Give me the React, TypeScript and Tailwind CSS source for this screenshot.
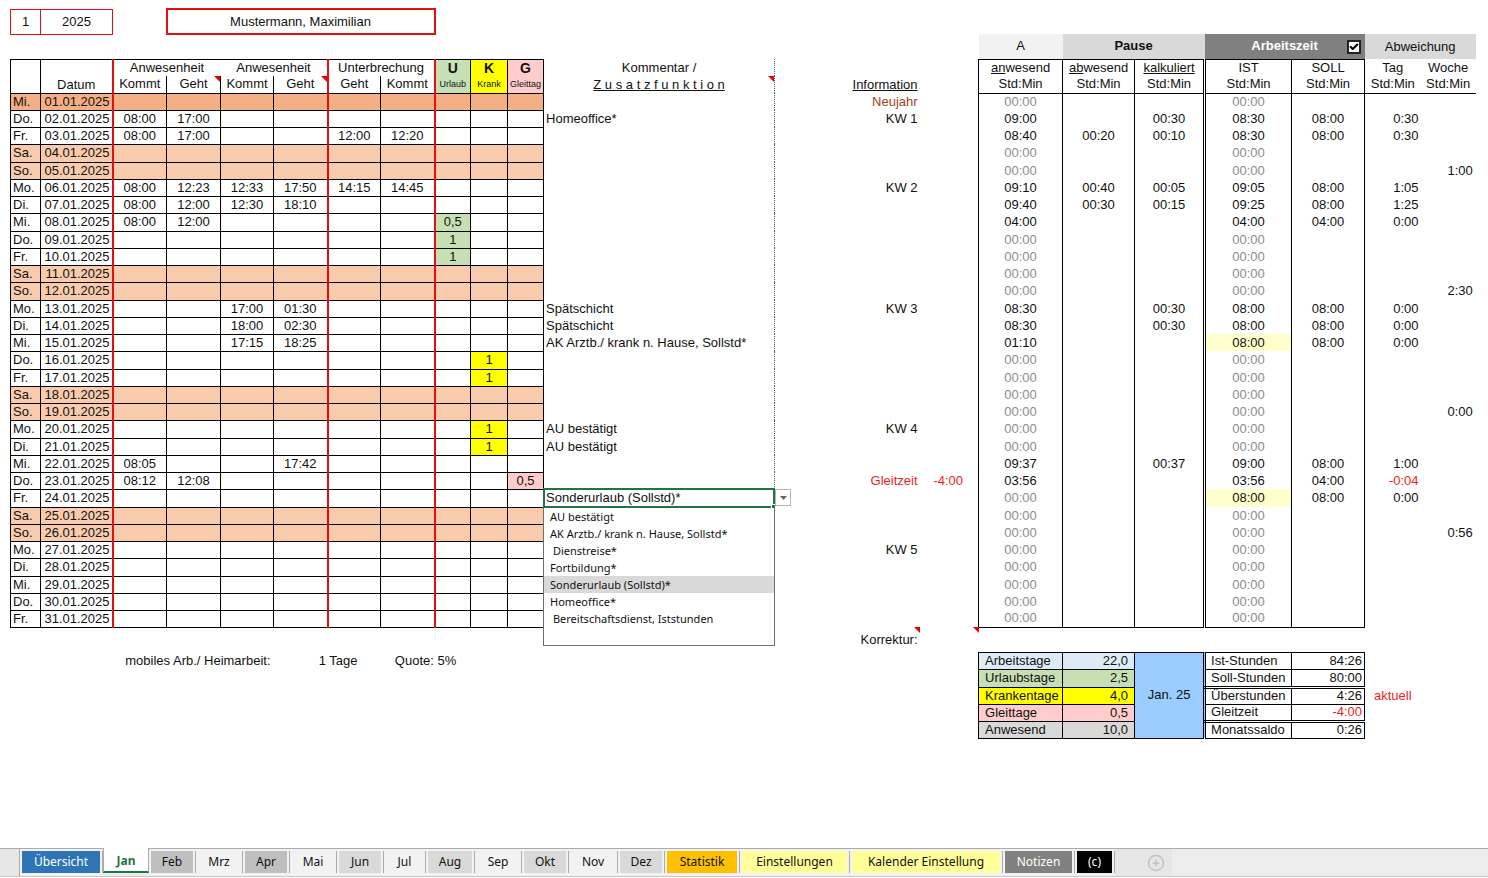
import { useState } from "react";
import { Check, CirclePlus } from "lucide-react";
import clsx from "clsx";

type DayEntry = {
  times?: string[];
  urlaub?: string;
  krank?: string;
  gleittag?: string;
  comment?: string;
  info?: string;
  infoColor?: string;
  gleitzeit?: string;
  anwesend?: string;
  abwesend?: string;
  kalkuliert?: string;
  ist?: string;
  istMarked?: boolean;
  soll?: string;
  tag?: string;
  woche?: string;
};

const WEEKDAYS = ["Mi.", "Do.", "Fr.", "Sa.", "So.", "Mo.", "Di."];

const ENTRIES: Record<number, DayEntry> = {
  1: { info: "Neujahr", infoColor: "text-[#a5401c]" },
  2: {
    times: ["08:00", "17:00"],
    comment: "Homeoffice*",
    info: "KW 1",
    anwesend: "09:00",
    kalkuliert: "00:30",
    ist: "08:30",
    soll: "08:00",
    tag: "0:30",
  },
  3: {
    times: ["08:00", "17:00", "", "", "12:00", "12:20"],
    anwesend: "08:40",
    abwesend: "00:20",
    kalkuliert: "00:10",
    ist: "08:30",
    soll: "08:00",
    tag: "0:30",
  },
  5: { woche: "1:00" },
  6: {
    times: ["08:00", "12:23", "12:33", "17:50", "14:15", "14:45"],
    info: "KW 2",
    anwesend: "09:10",
    abwesend: "00:40",
    kalkuliert: "00:05",
    ist: "09:05",
    soll: "08:00",
    tag: "1:05",
  },
  7: {
    times: ["08:00", "12:00", "12:30", "18:10"],
    anwesend: "09:40",
    abwesend: "00:30",
    kalkuliert: "00:15",
    ist: "09:25",
    soll: "08:00",
    tag: "1:25",
  },
  8: {
    times: ["08:00", "12:00"],
    urlaub: "0,5",
    anwesend: "04:00",
    ist: "04:00",
    soll: "04:00",
    tag: "0:00",
  },
  9: { urlaub: "1" },
  10: { urlaub: "1" },
  12: { woche: "2:30" },
  13: {
    times: ["", "", "17:00", "01:30"],
    comment: "Spätschicht",
    info: "KW 3",
    anwesend: "08:30",
    kalkuliert: "00:30",
    ist: "08:00",
    soll: "08:00",
    tag: "0:00",
  },
  14: {
    times: ["", "", "18:00", "02:30"],
    comment: "Spätschicht",
    anwesend: "08:30",
    kalkuliert: "00:30",
    ist: "08:00",
    soll: "08:00",
    tag: "0:00",
  },
  15: {
    times: ["", "", "17:15", "18:25"],
    comment: "AK Arztb./ krank n. Hause, Sollstd*",
    anwesend: "01:10",
    ist: "08:00",
    istMarked: true,
    soll: "08:00",
    tag: "0:00",
  },
  16: { krank: "1" },
  17: { krank: "1" },
  19: { woche: "0:00" },
  20: { krank: "1", comment: "AU bestätigt", info: "KW 4" },
  21: { krank: "1", comment: "AU bestätigt" },
  22: {
    times: ["08:05", "", "", "17:42"],
    anwesend: "09:37",
    kalkuliert: "00:37",
    ist: "09:00",
    soll: "08:00",
    tag: "1:00",
  },
  23: {
    times: ["08:12", "12:08"],
    gleittag: "0,5",
    info: "Gleitzeit",
    infoColor: "text-[#ee1c25]",
    gleitzeit: "-4:00",
    anwesend: "03:56",
    ist: "03:56",
    soll: "04:00",
    tag: "-0:04",
  },
  24: { ist: "08:00", istMarked: true, soll: "08:00", tag: "0:00" },
  26: { woche: "0:56" },
  27: { info: "KW 5" },
};

const ACTIVE_DAY = 24;

const OPTIONS = [
  "AU bestätigt",
  "AK Arztb./ krank n. Hause, Sollstd*",
  " Dienstreise*",
  "Fortbildung*",
  "Sonderurlaub (Sollstd)*",
  "Homeoffice*",
  " Bereitschaftsdienst, Iststunden",
];

const COLUMNS = [
  "w-[30px]",
  "w-[72px]",
  "w-[54px]",
  "w-[54px]",
  "w-[53px]",
  "w-[54px]",
  "w-[53px]",
  "w-[54px]",
  "w-[36px]",
  "w-[37px]",
  "w-[36px]",
  "w-[231px]",
  "w-[145px]",
  "w-[59px]",
  "w-[84px]",
  "w-[72px]",
  "w-[70px]",
  "w-[87px]",
  "w-[73px]",
  "w-[56px]",
  "w-[55px]",
];

const SUMMARY = [
  { label: "Arbeitstage", value: "22,0", color: "bg-[#ddebf7]", label2: "Ist-Stunden", value2: "84:26" },
  { label: "Urlaubstage", value: "2,5", color: "bg-[#c6e0b4]", label2: "Soll-Stunden", value2: "80:00", double: true },
  { label: "Krankentage", value: "4,0", color: "bg-[#ffff00]", label2: "Überstunden", value2: "4:26" },
  { label: "Gleittage", value: "0,5", color: "bg-[#ffcccc]", label2: "Gleitzeit", value2: "-4:00", double: true },
  { label: "Anwesend", value: "10,0", color: "bg-[#d9d9d9]", label2: "Monatssaldo", value2: "0:26" },
];

const TABS = [
  { name: "Übersicht", width: "w-[83px]", color: "bg-[#2e75b6] text-white" },
  { name: "Jan", width: "w-[46px]", color: "" },
  { name: "Feb", width: "w-[47px]", color: "bg-[#bfbfbf]" },
  { name: "Mrz", width: "w-[47px]", color: "bg-[#f2f2f2]" },
  { name: "Apr", width: "w-[47px]", color: "bg-[#bfbfbf]" },
  { name: "Mai", width: "w-[47px]", color: "bg-[#f2f2f2]" },
  { name: "Jun", width: "w-[47px]", color: "bg-[#d9d9d9]" },
  { name: "Jul", width: "w-[42px]", color: "bg-[#f2f2f2]" },
  { name: "Aug", width: "w-[49px]", color: "bg-[#d9d9d9]" },
  { name: "Sep", width: "w-[47px]", color: "bg-[#f2f2f2]" },
  { name: "Okt", width: "w-[47px]", color: "bg-[#d9d9d9]" },
  { name: "Nov", width: "w-[49px]", color: "bg-[#f2f2f2]" },
  { name: "Dez", width: "w-[47px]", color: "bg-[#d9d9d9]" },
  { name: "Statistik", width: "w-[75px]", color: "bg-[#ffc000]" },
  { name: "Einstellungen", width: "w-[110px]", color: "bg-[#ffff99]" },
  { name: "Kalender Einstellung", width: "w-[153px]", color: "bg-[#ffff99]" },
  { name: "Notizen", width: "w-[72px]", color: "bg-[#808080] text-white" },
  { name: "(c)", width: "w-[40px]", color: "bg-black text-white" },
];

function NoteMark() {
  return (
    <svg className="absolute top-0 right-0 size-[6px]" viewBox="0 0 6 6" aria-hidden="true">
      <path d="M0 0h6v6z" fill="#e60000" />
    </svg>
  );
}

function CommentPicker() {
  const [value, setValue] = useState("Sonderurlaub (Sollstd)*");
  const [open, setOpen] = useState(true);

  return (
    <>
      <select
        aria-label="Zusatzfunktion"
        value={value}
        onChange={(e) => setValue(e.target.value)}
        className="block w-full appearance-none bg-transparent outline-none"
      >
        {OPTIONS.map((option) => (
          <option key={option} value={option}>
            {option}
          </option>
        ))}
      </select>
      <div className="pointer-events-none absolute -inset-px border-2 border-[#217346]">
        <span className="absolute -right-[2px] -bottom-[2px] size-1 border-t border-l border-white bg-[#217346]" />
      </div>
      <button
        type="button"
        aria-label="Liste öffnen"
        onClick={() => setOpen(!open)}
        className="absolute top-0 left-full ml-px flex h-[17px] w-4 items-center justify-center border border-[#b5b5b5] bg-white"
      >
        <svg className="h-1 w-[7px]" viewBox="0 0 7 4" aria-hidden="true">
          <path d="M0 0h7L3.5 4z" fill="#666" />
        </svg>
      </button>
      {open && (
        <ul
          role="listbox"
          className="absolute top-full -right-px -left-px z-10 mt-px h-[138px] border border-t-0 border-[#707070] bg-white font-['Noto_Sans',sans-serif] text-[11px]"
        >
          {OPTIONS.map((option) => (
            <li key={option} role="option" aria-selected={option === value}>
              <button
                type="button"
                onClick={() => {
                  setValue(option);
                  setOpen(false);
                }}
                className={clsx(
                  "block h-[17px] w-full pl-[6px] text-left leading-[17px] whitespace-pre",
                  option === value && "bg-[#d9d9d9]"
                )}
              >
                {option}
              </button>
            </li>
          ))}
        </ul>
      )}
    </>
  );
}

function DayRow({ day }: { day: number }) {
  const entry = ENTRIES[day] ?? {};
  const weekday = WEEKDAYS[(day - 1) % 7];
  const weekend = weekday === "Sa." || weekday === "So.";
  const last = day === 31;

  return (
    // every fourth row is one pixel taller
    <tr className={day % 4 === 0 ? "h-[18px]" : "h-[17px]"}>
      {[weekday, `${String(day).padStart(2, "0")}.01.2025`, 0, 1, 2, 3, 4, 5, "u", "k", "g"].map((cell, i) => {
        const fill = day === 1 ? "bg-[#f4b084]" : weekend ? "bg-[#f8cbad]" : "";
        let text = typeof cell === "number" ? entry.times?.[cell] : cell;
        let color = fill;
        if (cell === "u") {
          text = entry.urlaub;
          if (text) color = "bg-[#c6e0b4]";
        } else if (cell === "k") {
          text = entry.krank;
          if (text) color = "bg-[#ffff00]";
        } else if (cell === "g") {
          text = entry.gleittag;
          if (text) color = "bg-[#ffcccc]";
        }
        return (
          <td
            key={i}
            className={clsx(
              "border border-black",
              i === 0 && "pl-[2px]",
              i === 1 && "pr-[2px] text-right",
              i > 1 && "text-center",
              (i === 1 || i === 5 || i === 7) && "border-r-2 border-r-[#e60f0f]",
              color
            )}
          >
            {text}
          </td>
        );
      })}
      <td className="relative border-r border-dotted border-r-[#555] pl-[2px]">
        {day === ACTIVE_DAY ? <CommentPicker /> : entry.comment}
      </td>
      <td className={clsx("pr-[2px] text-right", entry.infoColor)}>{entry.info}</td>
      <td className="pr-[15px] text-right text-[#ee1c25]">{entry.gleitzeit}</td>
      <td className={clsx("border-x border-black text-center", last && "border-b", !entry.anwesend && "text-[#8c8c8c]")}>
        {entry.anwesend ?? "00:00"}
      </td>
      <td className={clsx("border-x border-black text-center", last && "border-b")}>{entry.abwesend}</td>
      <td className={clsx("border-l border-black text-center", last && "border-b")}>{entry.kalkuliert}</td>
      <td
        className={clsx(
          "border-r border-l-3 border-black text-center [border-left-style:double]",
          last && "border-b",
          entry.istMarked && "bg-[#ffffcc]",
          !entry.ist && "text-[#8c8c8c]"
        )}
      >
        {entry.ist ?? "00:00"}
      </td>
      <td className={clsx("border-x border-black text-center", last && "border-b")}>{entry.soll}</td>
      <td className={clsx("pr-[2px] text-right", entry.tag?.startsWith("-") && "text-[#ee1c25]")}>{entry.tag}</td>
      <td className="pr-[3px] text-right">{entry.woche}</td>
    </tr>
  );
}

function SheetHeader() {
  return (
    <thead>
      <tr className="h-[25px]">
        <td className="border border-[#e60f0f] text-center">1</td>
        <td className="border border-[#e60f0f] text-center">2025</td>
        <td />
        <td colSpan={5} className="border-2 border-[#e60f0f] text-center">
          Mustermann, Maximilian
        </td>
        <td colSpan={13} />
      </tr>
      <tr className="h-[25px]">
        <td colSpan={14} />
        <th className="bg-[#f2f2f2]">A</th>
        <th colSpan={2} className="bg-[#d9d9d9] font-bold">
          Pause
        </th>
        <th colSpan={2} className="relative bg-[#808080] font-bold text-white">
          Arbeitszeit
          <input
            type="checkbox"
            aria-label="Arbeitszeit"
            defaultChecked
            className="peer absolute top-[6px] right-1 size-[14px] appearance-none border-2 border-[#222] bg-white"
          />
          <Check
            className="pointer-events-none absolute top-2 right-[6px] hidden size-[10px] text-black peer-checked:block"
            strokeWidth={5}
          />
        </th>
        <th colSpan={2} className="bg-[#d9d9d9]">
          Abweichung
        </th>
      </tr>
      <tr className="h-[17px]">
        <th rowSpan={2} className="border border-black" />
        <th rowSpan={2} className="border border-r-2 border-black border-r-[#e60f0f] pt-[17px]">
          Datum
        </th>
        <th colSpan={2} className="border-t border-black">
          Anwesenheit
        </th>
        <th colSpan={2} className="border-t border-r-2 border-black border-r-[#e60f0f]">
          Anwesenheit
        </th>
        <th colSpan={2} className="border-t border-r-2 border-black border-r-[#e60f0f]">
          Unterbrechung
        </th>
        <th className="border-x border-t border-black bg-[#c6e0b4] text-[14px] font-bold">U</th>
        <th className="border-x border-t border-black bg-[#ffff00] text-[14px] font-bold">K</th>
        <th className="border-x border-t border-black bg-[#ffcccc] text-[14px] font-bold">G</th>
        <th className="border-r border-dotted border-r-[#555]">Kommentar /</th>
        <th />
        <th />
        <th className="border-x border-t border-black">
          <u>an</u>wesend
        </th>
        <th className="border-x border-t border-black">
          <u>ab</u>wesend
        </th>
        <th className="border-t border-l border-black">
          <u>kalkuliert</u>
        </th>
        <th className="border-t border-r border-l-3 border-black [border-left-style:double]">IST</th>
        <th className="border-x border-t border-black">SOLL</th>
        <th>Tag</th>
        <th>Woche</th>
      </tr>
      <tr className="h-[17px]">
        <th className="border-r border-b border-black">Kommt</th>
        <th className="relative border-r border-b border-black">
          Geht
          <NoteMark />
        </th>
        <th className="border-r border-b border-black">Kommt</th>
        <th className="relative border-r-2 border-b border-black border-r-[#e60f0f]">
          Geht
          <NoteMark />
        </th>
        <th className="border-r border-b border-black">Geht</th>
        <th className="border-r-2 border-b border-black border-r-[#e60f0f]">Kommt</th>
        <th className="border-x border-b border-black bg-[#c6e0b4] text-[9px]">Urlaub</th>
        <th className="border-x border-b border-black bg-[#ffff00] text-[9px]">Krank</th>
        <th className="border-x border-b border-black bg-[#ffcccc] text-[9px]">Gleittag</th>
        <th className="relative border-r border-dotted border-r-[#555] underline">
          Z u s a t z f u n k t i o n
          <NoteMark />
        </th>
        <th className="text-right">
          <span className="mr-[2px] underline">Information</span>
        </th>
        <th />
        <th className="border-x border-b border-black">Std:Min</th>
        <th className="border-x border-b border-black">Std:Min</th>
        <th className="border-b border-l border-black">Std:Min</th>
        <th className="border-r border-b border-l-3 border-black [border-left-style:double]">Std:Min</th>
        <th className="border-x border-b border-black">Std:Min</th>
        <th className="border-b border-black">Std:Min</th>
        <th className="border-b border-black">Std:Min</th>
      </tr>
    </thead>
  );
}

function SheetSummary() {
  return (
    <tfoot>
      <tr className="h-[25px]">
        <td colSpan={12} />
        <td className="relative pr-[2px] text-right">
          Korrektur:
          <NoteMark />
        </td>
        <td className="relative">
          <NoteMark />
        </td>
        <td colSpan={7} />
      </tr>
      {SUMMARY.map((row, i) => (
        <tr key={row.label} className={i === 1 ? "h-[18px]" : "h-[17px]"}>
          {i === 0 ? (
            <>
              <td colSpan={2} />
              <td colSpan={3} className="pr-[3px] text-right">
                mobiles Arb./ Heimarbeit:
              </td>
              <td colSpan={2} className="pr-[23px] text-right">
                1 Tage
              </td>
              <td colSpan={2} className="text-center">
                Quote: 5%
              </td>
              <td colSpan={5} />
            </>
          ) : (
            <td colSpan={14} />
          )}
          <td className={clsx("border border-black pl-[6px]", row.color)}>{row.label}</td>
          <td className={clsx("border border-black pr-[6px] text-right", row.color)}>{row.value}</td>
          {i === 0 && (
            <td rowSpan={5} className="border border-black bg-[#99ccff] text-center">
              Jan. 25
            </td>
          )}
          <td
            className={clsx(
              "border border-l-3 border-black pl-[5px] [border-left-style:double]",
              row.double && "border-b-3 [border-bottom-style:double]"
            )}
          >
            {row.label2}
          </td>
          <td
            className={clsx(
              "border border-black pr-[2px] text-right",
              row.double && "border-b-3 [border-bottom-style:double]"
            )}
          >
            <span className={clsx(row.value2.startsWith("-") && "text-[#ee1c25]")}>{row.value2}</span>
          </td>
          <td className="text-center text-[#ee1c25]">{i === 2 && "aktuell"}</td>
          <td />
        </tr>
      ))}
    </tfoot>
  );
}

function SheetTabs() {
  const [active, setActive] = useState("Jan");

  return (
    <nav className="flex h-[30px] border-b border-white bg-[#ededed] font-['Noto_Sans',sans-serif] text-[12px]">
      <div className="h-[29px] w-5 shrink-0 border-t border-r border-b border-[#ababab] border-b-[#c6c6c6] bg-[#e6e6e6]" />
      {TABS.map((tab) => (
        <div
          key={tab.name}
          className={clsx(
            "h-[29px] shrink-0 border-b border-[#c6c6c6]",
            tab.width,
            tab.name !== active && "border-t border-t-[#ababab] bg-[#f2f2f2] pt-[2px]"
          )}
        >
          <button
            type="button"
            onClick={() => setActive(tab.name)}
            className={clsx(
              "block w-full text-center leading-[22px] whitespace-nowrap",
              tab.name === active
                ? "h-[25px] border-x border-b-2 border-x-[#ababab] border-b-[#217346] bg-white pt-[2px] font-bold text-[#217346]"
                : "h-[22px] border-r border-[#ababab] px-[2px]"
            )}
          >
            {tab.name === active ? tab.name : <span className={clsx("block", tab.color)}>{tab.name}</span>}
          </button>
        </div>
      ))}
      <div className="flex h-[29px] w-[57px] shrink-0 items-center justify-end border-t border-b border-t-[#ababab] border-b-[#c6c6c6] bg-[#e6e6e6] pr-[7px]">
        <button type="button" aria-label="Neues Blatt">
          <CirclePlus className="block size-[18px] text-[#c3c3c3]" strokeWidth={2} />
        </button>
      </div>
      <div className="h-[29px] flex-1 border-t border-b border-t-[#ababab] border-b-[#c6c6c6]" />
    </nav>
  );
}

export default function App() {
  return (
    <div className="flex min-h-screen flex-col bg-white font-['Liberation_Sans',Arial,sans-serif] text-[13px] text-[#111]">
      <main className="flex-1 pt-2 pr-[13px] pl-[10px]">
        <table className="w-full table-fixed border-collapse leading-[14px] whitespace-nowrap [&_td]:py-0 [&_th]:px-0 [&_th:not(.font-bold)]:font-normal">
          <colgroup>
            {COLUMNS.map((width, i) => (
              <col key={i} className={width} />
            ))}
          </colgroup>
          <SheetHeader />
          <tbody>
            {Array.from({ length: 31 }, (_, i) => (
              <DayRow key={i} day={i + 1} />
            ))}
          </tbody>
          <SheetSummary />
        </table>
      </main>
      <SheetTabs />
    </div>
  );
}
